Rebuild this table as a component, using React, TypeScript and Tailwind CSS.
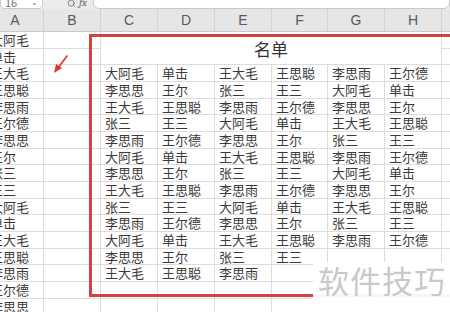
import { Search } from 'lucide-react'

const cols = ['A', 'B', 'C', 'D', 'E', 'F', 'G', 'H', 'I']
const widths = [57, 57, 57, 57, 57, 56, 57, 57, 57]

const colA = [
  '大阿毛', '单击', '王大毛', '王思聪', '李思雨', '王尔德', '李思思', '王尔', '张三',
  '王三', '大阿毛', '单击', '王大毛', '王思聪', '李思雨', '王尔德', '李思思',
]

const table = [
  ['大阿毛', '单击', '王大毛', '王思聪', '李思雨', '王尔德'],
  ['李思思', '王尔', '张三', '王三', '大阿毛', '单击'],
  ['王大毛', '王思聪', '李思雨', '王尔德', '李思思', '王尔'],
  ['张三', '王三', '大阿毛', '单击', '王大毛', '王思聪'],
  ['李思雨', '王尔德', '李思思', '王尔', '张三', '王三'],
  ['大阿毛', '单击', '王大毛', '王思聪', '李思雨', '王尔德'],
  ['李思思', '王尔', '张三', '王三', '大阿毛', '单击'],
  ['王大毛', '王思聪', '李思雨', '王尔德', '李思思', '王尔'],
  ['张三', '王三', '大阿毛', '单击', '王大毛', '王思聪'],
  ['李思雨', '王尔德', '李思思', '王尔', '张三', '王三'],
  ['大阿毛', '单击', '王大毛', '王思聪', '李思雨', '王尔德'],
  ['李思思', '王尔', '张三', '王三', '', ''],
  ['王大毛', '王思聪', '李思雨', '', '', ''],
  ['', '', '', '', '', ''],
  ['', '', '', '', '', ''],
]

const cell =
  'border-r border-b border-[#dcdcdc] text-[13px] leading-[16px] whitespace-nowrap overflow-hidden text-[#3a3a3a]'

export default function App() {
  return (
    <div
      className="relative w-[450px] h-[312px] overflow-hidden bg-white"
      style={{ fontFamily: '"Noto Sans CJK SC", "Liberation Sans", sans-serif' }}
    >
      {/* 工具栏 */}
      <div className="h-[9px] bg-[#ececec] flex items-end overflow-hidden">
        <div className="w-[43px] h-[20px] shrink-0 bg-white border border-[#c8c8c8] rounded-sm flex items-end justify-between px-1 text-[11px] leading-[12px] text-[#777]">
          <span>16</span>
          <span className="text-[8px]">⌄</span>
        </div>
        <div className="ml-[24px] flex items-end gap-[3px] text-[#666] h-full pb-[1px]">
          <Search size={9} strokeWidth={2} />
          <span className="text-[11px] leading-[10px] italic font-serif">fx</span>
        </div>
        <div className="ml-[6px] flex-1 h-[20px] bg-white border border-[#c8c8c8] rounded-md" />
      </div>

      {/* 列标题 */}
      <div className="flex -ml-[13px] h-[23px] bg-[#e6e6e6] border-b border-[#c9c9c9]">
        {cols.map((c, i) => (
          <div
            key={c}
            className="shrink-0 flex items-center justify-center border-r border-[#d2d2d2] text-[14px] text-[#5a5a5a]"
            style={{ width: widths[i], fontFamily: '"Liberation Sans", sans-serif' }}
          >
            {c}
          </div>
        ))}
      </div>

      {/* 表格 */}
      <div className="-ml-[13px] grid grid-cols-[57px_57px_57px_57px_57px_56px_57px_57px_57px] auto-rows-[16.67px]">
        {colA.map((name, r) => (
          <div key={'a' + r} className={cell + ' col-start-1 pl-[3px]'} style={{ gridRow: r + 1 }}>
            {name}
          </div>
        ))}
        {colA.map((_, r) => (
          <div key={'b' + r} className={cell + ' col-start-2'} style={{ gridRow: r + 1 }} />
        ))}
        <div className="col-start-3 col-span-6 row-start-1 row-span-2 border-r border-b border-[#dcdcdc] flex items-center justify-center pt-[2px] text-[17px] text-[#333]">
          名单
        </div>
        {table.map((row, r) =>
          row.map((v, c) => (
            <div key={r + '-' + c} className={cell + ' px-1'} style={{ gridRow: r + 3, gridColumn: c + 3 }}>
              {v}
            </div>
          ))
        )}
        {colA.map((_, r) => (
          <div key={'i' + r} className={cell + ' col-start-9'} style={{ gridRow: r + 1 }} />
        ))}
      </div>

      {/* 红色框 */}
      <div className="absolute left-[89px] top-[34px] w-[420px] h-[263px] border-[3px] border-[#d8403c]" />

      {/* 红色箭头 */}
      <svg className="absolute left-[50px] top-[52px]" width="22" height="24" viewBox="0 0 22 24">
        <line x1="17" y1="4" x2="8" y2="16" stroke="#e0302a" strokeWidth="1.6" strokeLinecap="round" />
        <polygon points="4,21 6,12 12,16" fill="#e0302a" />
      </svg>

      {/* 水印 */}
      <div className="absolute left-[313px] top-[262px] right-0 bottom-0 bg-white/95 flex items-start pl-[5px] pt-[1px]">
        <span className="text-[31px] leading-[34px] text-[#c9c9c9] tracking-[1px]">软件技巧</span>
      </div>
    </div>
  )
}
